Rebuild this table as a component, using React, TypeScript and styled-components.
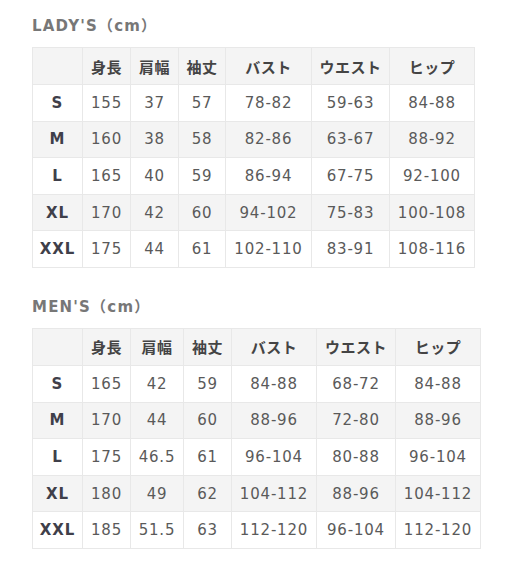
import React, { FC } from "react";
import styled, { createGlobalStyle } from "styled-components";

const GlobalStyle = createGlobalStyle`
  body {
    margin: 0;
    background: #ffffff;
    font-family: "DejaVu Sans", Verdana, "Noto Sans CJK JP", sans-serif;
  }
`;

const Page = styled.div`
  padding: 15px 0 0 32px;
  display: flex;
  flex-direction: column;
`;

const Section = styled.section`
  display: flex;
  flex-direction: column;
  margin-bottom: 28px;
`;

const Title = styled.h3`
  margin: 0 0 9px;
  height: 23px;
  line-height: 23px;
  font-size: 15px;
  font-weight: bold;
  letter-spacing: 1.2px;
  color: #777777;
  font-family: "DejaVu Sans", "Noto Sans CJK JP", sans-serif;
`;

const Table = styled.table`
  border-collapse: collapse;
  table-layout: fixed;
  font-size: 15px;
  letter-spacing: 0.8px;
  color: #5a5a5a;
`;

const Col = styled.col<{ $w: number }>`
  width: ${(p) => p.$w}px;
`;

const Row = styled.tr<{ $shade?: boolean }>`
  background: ${(p) => (p.$shade ? "#f4f4f4" : "#ffffff")};
`;

const HeadCell = styled.th`
  height: 36px;
  padding: 0;
  border: 1px solid #e8e8e8;
  text-align: center;
  font-family: "Noto Sans CJK JP", sans-serif;
  font-size: 15px;
  font-weight: bold;
  letter-spacing: 0.5px;
  color: #444444;
`;

const SizeCell = styled.th`
  height: 35.6px;
  padding: 0;
  border: 1px solid #e8e8e8;
  text-align: center;
  font-weight: bold;
  letter-spacing: 1px;
  color: #3f3f4a;
`;

const Cell = styled.td`
  height: 35.6px;
  padding: 0;
  border: 1px solid #e8e8e8;
  text-align: center;
  white-space: nowrap;
`;

const heads = ["身長", "肩幅", "袖丈", "バスト", "ウエスト", "ヒップ"];

interface ChartProps {
  title: string;
  widths: number[];
  rows: string[][];
}

const SizeChart: FC<ChartProps> = ({ title, widths, rows }) => (
  <Section>
    <Title>{title}</Title>
    <Table style={{ width: widths.reduce((a, b) => a + b, 0) }}>
      <colgroup>
        {widths.map((w, i) => (
          <Col key={i} $w={w} />
        ))}
      </colgroup>
      <thead>
        <Row $shade>
          <HeadCell />
          {heads.map((h) => (
            <HeadCell key={h}>{h}</HeadCell>
          ))}
        </Row>
      </thead>
      <tbody>
        {rows.map((r, i) => (
          <Row key={r[0]} $shade={i % 2 === 1}>
            <SizeCell>{r[0]}</SizeCell>
            {r.slice(1).map((v, j) => (
              <Cell key={j}>{v}</Cell>
            ))}
          </Row>
        ))}
      </tbody>
    </Table>
  </Section>
);

const ladies = [
  ["S", "155", "37", "57", "78-82", "59-63", "84-88"],
  ["M", "160", "38", "58", "82-86", "63-67", "88-92"],
  ["L", "165", "40", "59", "86-94", "67-75", "92-100"],
  ["XL", "170", "42", "60", "94-102", "75-83", "100-108"],
  ["XXL", "175", "44", "61", "102-110", "83-91", "108-116"],
];

const mens = [
  ["S", "165", "42", "59", "84-88", "68-72", "84-88"],
  ["M", "170", "44", "60", "88-96", "72-80", "88-96"],
  ["L", "175", "46.5", "61", "96-104", "80-88", "96-104"],
  ["XL", "180", "49", "62", "104-112", "88-96", "104-112"],
  ["XXL", "185", "51.5", "63", "112-120", "96-104", "112-120"],
];

const App: FC = () => (
  <>
    <GlobalStyle />
    <Page>
      <SizeChart
        title="LADY'S（cm）"
        widths={[50, 48, 48, 47, 86, 78, 85]}
        rows={ladies}
      />
      <SizeChart
        title="MEN'S（cm）"
        widths={[50, 48, 53, 48, 85, 79, 85]}
        rows={mens}
      />
    </Page>
  </>
);

export default App;
